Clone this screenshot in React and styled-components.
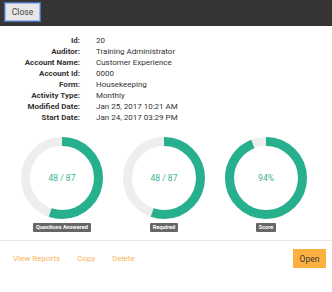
import React from "react";
import styled, { createGlobalStyle } from "styled-components";

const Global = createGlobalStyle`
  html, body { margin: 0; padding: 0; background: #fff; }
  body { font-family: Roboto, "Liberation Sans", Arial, sans-serif; }
  * { box-sizing: border-box; }
`;

const Page = styled.div`
  width: 332px;
  height: 292px;
  background: #fff;
  display: flex;
  flex-direction: column;
`;

const Header = styled.div`
  height: 26px;
  background: #353535;
  display: flex;
  align-items: flex-start;
  padding: 2px 0 0 4px;
`;

const CloseButton = styled.button`
  width: 37px;
  height: 20px;
  padding: 0;
  background: #e7e7e7;
  border: 1px solid #4c72c4;
  box-shadow: inset 0 0 0 1px #9db3e0;
  color: #444;
  font-family: Roboto, "Liberation Sans", Arial, sans-serif;
  font-size: 8.5px;
`;

const Details = styled.div`
  display: grid;
  grid-template-columns: 80px auto;
  column-gap: 16px;
  grid-auto-rows: 11px;
  margin-top: 9px;
  font-size: 8px;
  line-height: 11px;
  color: #333;
`;

const Label = styled.div`
  text-align: right;
  font-weight: 700;
  color: #333;
`;

const Value = styled.div`
  color: #333;
  white-space: nowrap;
`;

const Charts = styled.div`
  display: grid;
  grid-template-columns: repeat(3, 102px);
  padding-left: 11px;
  margin-top: 14px;
`;

const ChartItem = styled.div`
  display: flex;
  flex-direction: column;
  align-items: center;
`;

const DonutWrap = styled.div`
  position: relative;
  width: 82px;
  height: 82px;
`;

const DonutText = styled.div`
  position: absolute;
  inset: 0;
  display: flex;
  align-items: center;
  justify-content: center;
  color: #3bb394;
  font-size: 8.5px;
`;

const Badge = styled.div`
  margin-top: 4px;
  height: 9px;
  padding: 0 3px;
  background: #666;
  border-radius: 1px;
  color: #fff;
  font-size: 5.6px;
  font-weight: 700;
  line-height: 9px;
  white-space: nowrap;
`;

const Divider = styled.div`
  height: 1px;
  background: #e6e6e6;
  margin-top: 8px;
`;

const Footer = styled.div`
  display: flex;
  align-items: center;
  padding: 8px 6px 0 13px;
`;

const Link = styled.a`
  color: #f7b25a;
  font-size: 8px;
  margin-right: 17px;
  text-decoration: none;
`;

const OpenButton = styled.button`
  margin-left: auto;
  width: 33px;
  height: 19px;
  padding: 0;
  border: none;
  background: #fbb040;
  color: #3a3a3a;
  font-family: Roboto, "Liberation Sans", Arial, sans-serif;
  font-size: 8.5px;
`;

const Donut = ({ value, text }) => {
  const r = 36.5;
  const c = 2 * Math.PI * r;
  return (
    <DonutWrap>
      <svg width="82" height="82" viewBox="0 0 82 82">
        <circle cx="41" cy="41" r={r} fill="none" stroke="#eeeeee" strokeWidth="9" />
        <circle
          cx="41"
          cy="41"
          r={r}
          fill="none"
          stroke="#27b08e"
          strokeWidth="9"
          strokeDasharray={`${c * value} ${c}`}
          transform="rotate(-90 41 41)"
        />
      </svg>
      <DonutText>{text}</DonutText>
    </DonutWrap>
  );
};

const rows = [
  ["Id:", "20"],
  ["Auditor:", "Training Administrator"],
  ["Account Name:", "Customer Experience"],
  ["Account Id:", "0000"],
  ["Form:", "Housekeeping"],
  ["Activity Type:", "Monthly"],
  ["Modified Date:", "Jan 25, 2017 10:21 AM"],
  ["Start Date:", "Jan 24, 2017 03:29 PM"],
];

const charts = [
  { value: 48 / 87, text: "48 / 87", label: "Questions Answered" },
  { value: 48 / 87, text: "48 / 87", label: "Required" },
  { value: 0.94, text: "94%", label: "Score" },
];

export default function App() {
  return (
    <>
      <Global />
      <Page>
        <Header>
          <CloseButton>Close</CloseButton>
        </Header>
        <Details>
          {rows.map(([l, v]) => (
            <React.Fragment key={l}>
              <Label>{l}</Label>
              <Value>{v}</Value>
            </React.Fragment>
          ))}
        </Details>
        <Charts>
          {charts.map((c) => (
            <ChartItem key={c.label}>
              <Donut value={c.value} text={c.text} />
              <Badge>{c.label}</Badge>
            </ChartItem>
          ))}
        </Charts>
        <Divider />
        <Footer>
          <Link>View Reports</Link>
          <Link>Copy</Link>
          <Link>Delete</Link>
          <OpenButton>Open</OpenButton>
        </Footer>
      </Page>
    </>
  );
}
